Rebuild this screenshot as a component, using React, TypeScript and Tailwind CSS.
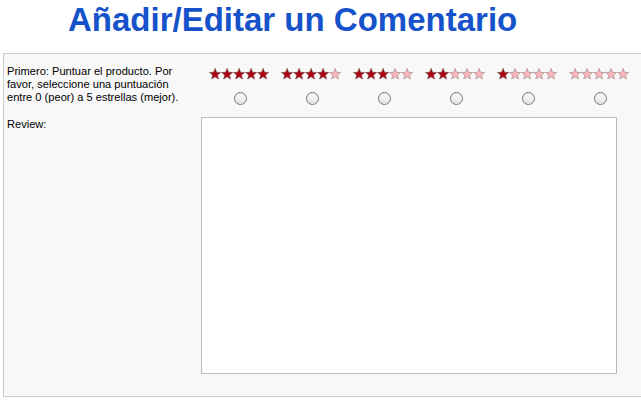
import React from "react";

const DARK = "#b00010";
const LIGHT = "#ffb5bc";

function Star({ filled }: { filled: boolean }) {
  return (
    <svg width="12.2" height="12" viewBox="0 0 24 24" className="block">
      <polygon
        points="12,1 14.9,8.6 23,9 16.7,14.1 18.8,22 12,17.5 5.2,22 7.3,14.1 1,9 9.1,8.6"
        fill={filled ? DARK : LIGHT}
        stroke={filled ? "#7a4a4a" : "#a08c8e"}
        strokeWidth="1.4"
        strokeLinejoin="round"
      />
    </svg>
  );
}

function Stars({ n }: { n: number }) {
  return (
    <div className="flex">
      {[0, 1, 2, 3, 4].map((i) => (
        <Star key={i} filled={i < n} />
      ))}
    </div>
  );
}

export default function App() {
  const ratings = [5, 4, 3, 2, 1, 0];
  return (
    <div
      className="w-[641px] h-[410px] overflow-hidden bg-white"
      style={{ fontFamily: '"Liberation Sans", Arial, sans-serif' }}
    >
      <h1 className="pl-[68px] pt-[1px] h-[53px] text-[33px] font-bold text-[#1652c9] leading-[38px]">
        Añadir/Editar un Comentario
      </h1>
      <div className="ml-[3px] w-[700px] h-[344px] border border-[#cccccc] bg-[#f8f8f8] pt-[10px]">
        <div className="flex">
          <div className="w-[200px] pl-[3px] pt-[1px] text-black">
            <p className="w-[184px] text-[11.1px] leading-[13px]">
              Primero: Puntuar el producto. Por favor, seleccione una puntuación entre 0 (peor) a 5 estrellas (mejor).
            </p>
          </div>
          <div className="flex">
            {ratings.map((r) => (
              <div key={r} className="w-[72px] flex flex-col items-center">
                <div className="pt-[4px] h-[28px] -ml-[2px]">
                  <Stars n={r} />
                </div>
                <input
                  type="radio"
                  name="rating"
                  className="appearance-none w-[13px] h-[13px] rounded-full border border-[#7a7a7a] bg-linear-to-b from-[#ffffff] to-[#e2e2e2] shadow-[inset_0_1px_1px_rgba(0,0,0,0.12)] m-0"
                />
              </div>
            ))}
          </div>
        </div>
        <div className="flex mt-[12px]">
          <div className="w-[197px] pl-[3px] text-[11.1px] leading-[13px] pt-[1px] text-black">
            Review:
          </div>
          <textarea className="w-[416px] h-[257px] border border-[#bbbbbb] bg-white resize-none outline-none" />
        </div>
      </div>
    </div>
  );
}
